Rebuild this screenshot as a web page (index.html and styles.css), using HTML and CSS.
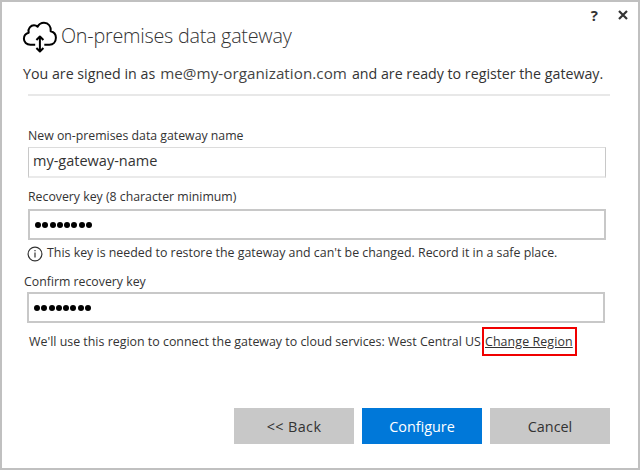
FILE: index.html
```html
<!DOCTYPE html>
<html lang="en">
<head>
<meta charset="utf-8">
<title>On-premises data gateway</title>
<link rel="stylesheet" href="styles.css">
</head>
<body>
<main class="dialog">
  <div class="titlebar">
    <span class="help">?</span>
    <svg class="close" viewBox="0 0 10 10"><path d="M1 1L9 9M9 1L1 9"/></svg>
  </div>
  <header class="header">
    <svg class="cloud" viewBox="0 0 36 34">
      <path d="M13.2 24.7H8.4C4.5 24.7 1.9 22 1.9 18.8C1.9 15.5 4 13.3 6.7 12.7C5.5 8.2 9 5.3 12 5.3C13.5 5.3 14.7 5.9 15.6 6.8C17 4 19.3 2.8 22 2.8C26.5 2.8 29.3 6.5 28.7 11.3C31.8 12 33.9 14.5 33.9 17.8C33.9 22 31.2 24.7 27.4 24.7H22.3M17.9 17V31M14.4 20L17.9 16.5L21.4 20M14.4 28L17.9 31.5L21.4 28"/>
    </svg>
    <h1 class="title">On-premises data gateway</h1>
  </header>
  <p class="signed"><span class="s1">You are signed in as</span><span class="s2">me@my-organization.com</span><span class="s3">and are ready to register the gateway.</span></p>
  <div class="rule"></div>
  <form class="form">
    <label class="label l-name">New on-premises data gateway name</label>
    <div class="field field-name">my-gateway-name</div>
    <label class="label l-key">Recovery key (8 character minimum)</label>
    <div class="field secret"><i></i><i></i><i></i><i></i><i></i><i></i><i></i><i></i></div>
    <div class="note">
      <svg class="info" viewBox="0 0 16 16"><circle cx="8" cy="8" r="6.9"/><path d="M8 6.6V11.6M8 4V5.3"/></svg>
      <span class="note-text">This key is needed to restore the gateway and can't be changed. Record it in a safe place.</span>
    </div>
    <label class="label l-confirm">Confirm recovery key</label>
    <div class="field secret confirm"><i></i><i></i><i></i><i></i><i></i><i></i><i></i><i></i></div>
    <div class="region"><span class="region-text">We'll use this region to connect the gateway to cloud services: West Central US</span><span class="mark"><a class="link">Change Region</a></span></div>
  </form>
  <footer class="buttons">
    <div class="btn"><span class="b1">&lt;&lt; Back</span></div>
    <div class="btn primary"><span class="b2">Configure</span></div>
    <div class="btn"><span class="b3">Cancel</span></div>
  </footer>
</main>
</body>
</html>
```
FILE: styles.css
```css
* { box-sizing: border-box; }
body { margin: 0; background: #fff; font-family: "Open Sans", "Noto Sans", sans-serif; color: #333; }
.dialog { width: 640px; height: 470px; border: 2px solid #c0c0c0; display: flex; flex-direction: column; overflow: hidden; white-space: nowrap; }
.titlebar { flex: none; height: 26px; display: flex; justify-content: flex-end; align-items: center; gap: 20px; padding-right: 10px; }
.help { font-size: 15px; font-weight: 700; line-height: 20px; }
.close { width: 10px; height: 10px; fill: none; stroke: #333; stroke-width: 2.2; }
.header { flex: none; height: 36px; margin-top: -10px; padding-left: 20px; display: flex; }
.cloud { width: 36px; height: 34px; margin-top: 2px; fill: none; stroke: #000; stroke-width: 2; stroke-linejoin: round; }
.title { margin: 3px 0 0 3px; font-size: 19.8px; line-height: 30px; font-weight: 350; color: #333; letter-spacing: -0.25px; }
.signed { flex: none; margin: 10px 0 0 21px; font-size: 14.22px; line-height: 20px; display: flex; gap: 5px; }
.s2 { font-size: 15.2px; line-height: 18px; letter-spacing: 0.05px; color: #444; }
.rule { flex: none; margin: 10px 0 0 26px; width: 582px; height: 2px; background: #e8e8e8; }
.form { margin: 30px 0 0 26px; }
.label { display: block; font-size: 12.3px; line-height: 20px; height: 20px; }
.field { width: 578px; height: 31px; border: 1px solid #c8c8c8; border-top-color: #dcdcdc; border-bottom: 2px solid #eaeaea; margin-top: 1px; padding-left: 4px; font-size: 14.5px; line-height: 26px; }
.l-key { margin-top: 9px; }
.secret { border: 2px solid #c8c8c8; margin-top: 2px; display: flex; align-items: center; gap: 1.25px; padding-left: 5px; }
.secret i { width: 6px; height: 6px; border-radius: 50%; background: #000; }
.note { height: 20px; margin-top: 3px; display: flex; align-items: center; gap: 3px; font-size: 12.38px; line-height: 20px; }
.info { width: 16px; height: 16px; margin: 1px 0 0 -1px; fill: none; stroke: #333; stroke-width: 1.2; }
.note-text { margin-left: 1px; }
.l-confirm { margin: 9px 0 0 -4px; }
.confirm { margin: 0 0 0 -1px; }
.region { margin: 4px 0 0 1px; height: 30px; display: flex; font-size: 12.42px; line-height: 29px; }
.region-text { width: 453px; }
.mark { width: 95px; height: 29px; border: 2px solid #f00000; line-height: 25px; padding-left: 1px; }
.link { text-decoration: underline; text-underline-offset: 1px; letter-spacing: 0.1px; }
.buttons { margin: 51px 0 0 232px; display: flex; gap: 8px; }
.btn { width: 120px; height: 36px; background: #c8c8c8; text-align: center; font-size: 14.4px; line-height: 37px; }
.b1 { letter-spacing: 0.4px; }
.primary { background: #0078d9; color: #fff; }
```
